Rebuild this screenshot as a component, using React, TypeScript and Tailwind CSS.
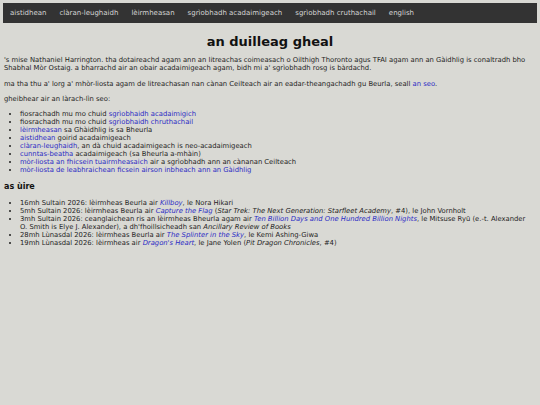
import React from "react";

const A = ({ children, i }: { children: React.ReactNode; i?: boolean }) => (
  <a href="#" className={"text-[#2b2bc4] no-underline" + (i ? " italic" : "")}>{children}</a>
);

export default function App() {
  return (
    <div className="min-h-[405px] w-[540px] bg-[#d9d9d4] px-[3px] pt-[3px] text-[6.8px] leading-[8px] text-[#1e1e1e]" style={{ fontFamily: '"DejaVu Sans", Verdana, sans-serif' }}>
      <nav className="flex h-[20px] items-center bg-[#333333] pl-[7px] text-[7px] text-[#d4d4d4]">
        <span className="mr-[13px]">aistidhean</span>
        <span className="mr-[13px]">clàran-leughaidh</span>
        <span className="mr-[13px]">lèirmheasan</span>
        <span className="mr-[13px]">sgrìobhadh acadaimigeach</span>
        <span className="mr-[13px]">sgrìobhadh cruthachail</span>
        <span>english</span>
      </nav>
      <div className="px-[1px]">
        <h1 className="mt-[12px] text-center text-[13px] font-bold leading-[14px] text-[#111]">an duilleag gheal</h1>
        <p className="mt-[7px]">
          's mise Nathaniel Harrington. tha dotaireachd agam ann an litreachas coimeasach o Oilthigh Thoronto agus TFAI agam ann an Gàidhlig is conaltradh bho Shabhal Mòr Ostaig. a bharrachd air an obair acadaimigeach agam, bidh mi a' sgrìobhadh rosg is bàrdachd.
        </p>
        <p className="mt-[8px]">
          ma tha thu a' lorg a' mhòr-liosta agam de litreachasan nan cànan Ceilteach air an eadar-theangachadh gu Beurla, seall <A>an seo</A>.
        </p>
        <p className="mt-[7px]">gheibhear air an làrach-lìn seo:</p>
        <ul className="mt-[7px] list-disc pl-[16px]">
          <li>fiosrachadh mu mo chuid <A>sgrìobhaidh acadaimigich</A></li>
          <li>fiosrachadh mu mo chuid <A>sgrìobhaidh chruthachail</A></li>
          <li><A>lèirmheasan</A> sa Ghàidhlig is sa Bheurla</li>
          <li><A>aistidhean</A> goirid acadaimigeach</li>
          <li><A>clàran-leughaidh</A>, an dà chuid acadaimigeach is neo-acadaimigeach</li>
          <li><A>cunntas-beatha</A> acadaimigeach (sa Bheurla a-mhàin)</li>
          <li><A>mòr-liosta an fhicsein tuairmheasaich</A> air a sgrìobhadh ann an cànanan Ceilteach</li>
          <li><A>mòr-liosta de leabhraichean ficsein airson inbheach ann an Gàidhlig</A></li>
        </ul>
        <h2 className="mt-[8px] text-[8px] font-bold leading-[10px] text-[#111]">as ùire</h2>
        <ul className="mt-[7px] list-disc pl-[16px] pr-[6px]">
          <li>16mh Sultain 2026: lèirmheas Beurla air <A i>Killboy</A>, le Nora Hikari</li>
          <li>5mh Sultain 2026: lèirmheas Beurla air <A i>Capture the Flag</A> (<i>Star Trek: The Next Generation: Starfleet Academy</i>, #4), le John Vornholt</li>
          <li>3mh Sultain 2026: ceanglaichean ris an lèirmheas Bheurla agam air <A i>Ten Billion Days and One Hundred Billion Nights</A>, le Mitsuse Ryū (e.-t. Alexander O. Smith is Elye J. Alexander), a dh'fhoillsicheadh san <i>Ancillary Review of Books</i></li>
          <li>28mh Lùnasdal 2026: lèirmheas Beurla air <A i>The Splinter in the Sky</A>, le Kemi Ashing-Giwa</li>
          <li>19mh Lùnasdal 2026: lèirmheas air <A i>Dragon's Heart</A>, le Jane Yolen (<i>Pit Dragon Chronicles</i>, #4)</li>
        </ul>
      </div>
    </div>
  );
}
